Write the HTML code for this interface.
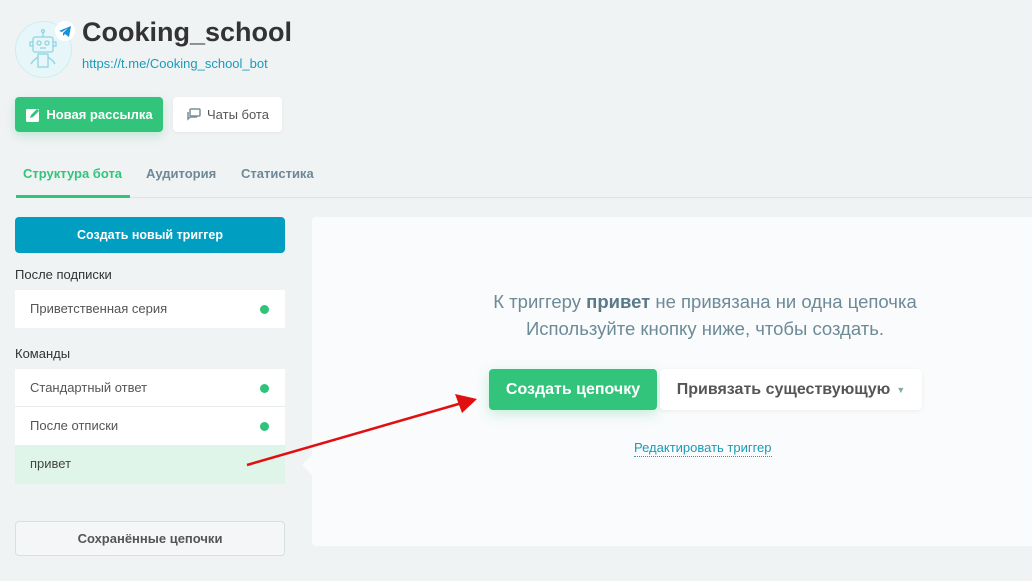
<!DOCTYPE html>
<html><head><meta charset="utf-8"><style>
*{box-sizing:border-box;margin:0;padding:0}
body{width:1032px;height:581px;overflow:hidden;background:#f0f3f4;font-family:"Liberation Sans",sans-serif;position:relative;color:#333}
.abs{position:absolute}
.btn{position:absolute;border-radius:4px;display:flex;align-items:center;justify-content:center;font-size:13px;font-weight:bold}
.item{position:absolute;left:15px;width:270px;height:38px;background:#fff;font-size:13px;color:#555;padding-left:15px;line-height:38px}
.dot{position:absolute;right:16px;top:15px;width:9px;height:9px;border-radius:50%;background:#2fc27a}
</style></head><body>
<div class="abs" style="left:15px;top:21px;width:57px;height:57px;border-radius:50%;background:#e6f6f9;border:1px solid #cdeef3"></div>
<svg class="abs" style="left:26px;top:28px" width="36" height="42" viewBox="0 0 36 42" fill="none" stroke="#8fd3e2" stroke-width="1.3"><circle cx="17" cy="3" r="1.5"/><path d="M17 5v4"/><rect x="7" y="9" width="20" height="15" rx="2"/><circle cx="13" cy="15" r="2"/><circle cx="21" cy="15" r="2"/><path d="M14 20h6M7 14H4v4h3M27 14h3v4h-3"/><rect x="12" y="26" width="10" height="13"/><path d="M12 29l-5 4-2 3M22 29l5 4 2 3"/></svg>
<div class="abs" style="left:55px;top:21px;width:20px;height:20px;border-radius:50%;background:#fff"></div>
<svg class="abs" style="left:58px;top:24px" width="14" height="14" viewBox="0 0 14 14"><path d="M1 7l12-5-2 11-4-3-2 2v-3l5-5-6 4z" fill="#1a8fd8"/></svg>
<div class="abs" style="left:82px;top:17px;font-size:27px;font-weight:bold;color:#333">Cooking_school</div>
<div class="abs" style="left:82px;top:56px;font-size:13px;color:#1a9bb8">https://t.me/Cooking_school_bot</div>
<div class="btn" style="left:15px;top:97px;width:148px;height:35px;background:#33c47b;color:#fff;box-shadow:0 4px 10px rgba(51,196,123,.25)"><svg width="16" height="16" viewBox="0 0 16 16" style="margin-right:5px"><rect x="1" y="2" width="13" height="13" rx="1.5" fill="#fff"/><path d="M5 11l1-3 6-6 2 2-6 6z" fill="#33c47b"/></svg>Новая рассылка</div>
<div class="btn" style="left:173px;top:97px;width:109px;height:35px;background:#fff;color:#555;font-weight:normal;box-shadow:0 1px 3px rgba(0,0,0,.06)"><svg width="16" height="14" viewBox="0 0 16 14" style="margin-right:5px" fill="none" stroke="#7a8f99" stroke-width="1.5"><rect x="4" y="1" width="10" height="7" rx="1"/><path d="M2 4v7l2-2h7"/></svg>Чаты бота</div>
<div class="abs" style="left:23px;top:166px;font-size:13px;font-weight:bold;color:#33c47b">Структура бота</div>
<div class="abs" style="left:146px;top:166px;font-size:13px;font-weight:bold;color:#6e8896">Аудитория</div>
<div class="abs" style="left:241px;top:166px;font-size:13px;font-weight:bold;color:#6e8896">Статистика</div>
<div class="abs" style="left:16px;top:197px;width:1016px;height:1px;background:#d5e8e4"></div>
<div class="abs" style="left:16px;top:195px;width:114px;height:3px;background:#33c47b"></div>
<div class="btn" style="left:15px;top:217px;width:270px;height:36px;background:#009fc2;color:#fff;font-size:12.5px">Создать новый триггер</div>
<div class="abs" style="left:15px;top:267px;font-size:13px;color:#333">После подписки</div>
<div class="item" style="top:290px">Приветственная серия<div class="dot"></div></div>
<div class="abs" style="left:15px;top:346px;font-size:13px;color:#333">Команды</div>
<div class="item" style="top:369px">Стандартный ответ<div class="dot"></div></div>
<div class="abs" style="left:15px;top:406px;width:270px;height:1px;background:#e6ecee"></div>
<div class="item" style="top:407px">После отписки<div class="dot"></div></div>
<div class="item" style="top:445px;background:#e0f5ea;color:#444;height:39px">привет</div>
<div class="btn" style="left:15px;top:521px;width:270px;height:35px;background:#f4f6f7;border:1px solid #d8dfe1;color:#555">Сохранённые цепочки</div>
<div class="abs" style="left:312px;top:217px;width:720px;height:329px;background:#f9fbfc;border-radius:4px 0 0 4px"></div>
<div class="abs" style="left:302px;top:455px;width:0;height:0;border-top:10px solid transparent;border-bottom:10px solid transparent;border-right:10px solid #f9fbfc"></div>
<div class="abs" style="left:312px;top:288px;width:786px;text-align:center;font-size:18.5px;color:#6d8a96;line-height:27px">К триггеру <b style="color:#5a7a88">привет</b> не привязана ни одна цепочка<br>Используйте кнопку ниже, чтобы создать.</div>
<div class="btn" style="left:489px;top:369px;width:168px;height:41px;background:#33c47b;color:#fff;font-size:16px;box-shadow:0 4px 12px rgba(51,196,123,.25)">Создать цепочку</div>
<div class="btn" style="left:660px;top:369px;width:262px;height:41px;background:#fff;color:#555;font-size:16px;box-shadow:0 1px 4px rgba(0,0,0,.06)">Привязать существующую <span style="font-size:9px;color:#8aa;margin-left:6px">▼</span></div>
<div class="abs" style="left:634px;top:440px;font-size:13px;color:#1a9bb8;border-bottom:1px dotted #1a9bb8;line-height:16px">Редактировать триггер</div>
<svg class="abs" style="left:0;top:0" width="1032" height="581"><path d="M247 465L462 403" stroke="#e01010" stroke-width="2.5"/><path d="M477 399L455 394 462 413z" fill="#e01010"/></svg>
</body></html>
